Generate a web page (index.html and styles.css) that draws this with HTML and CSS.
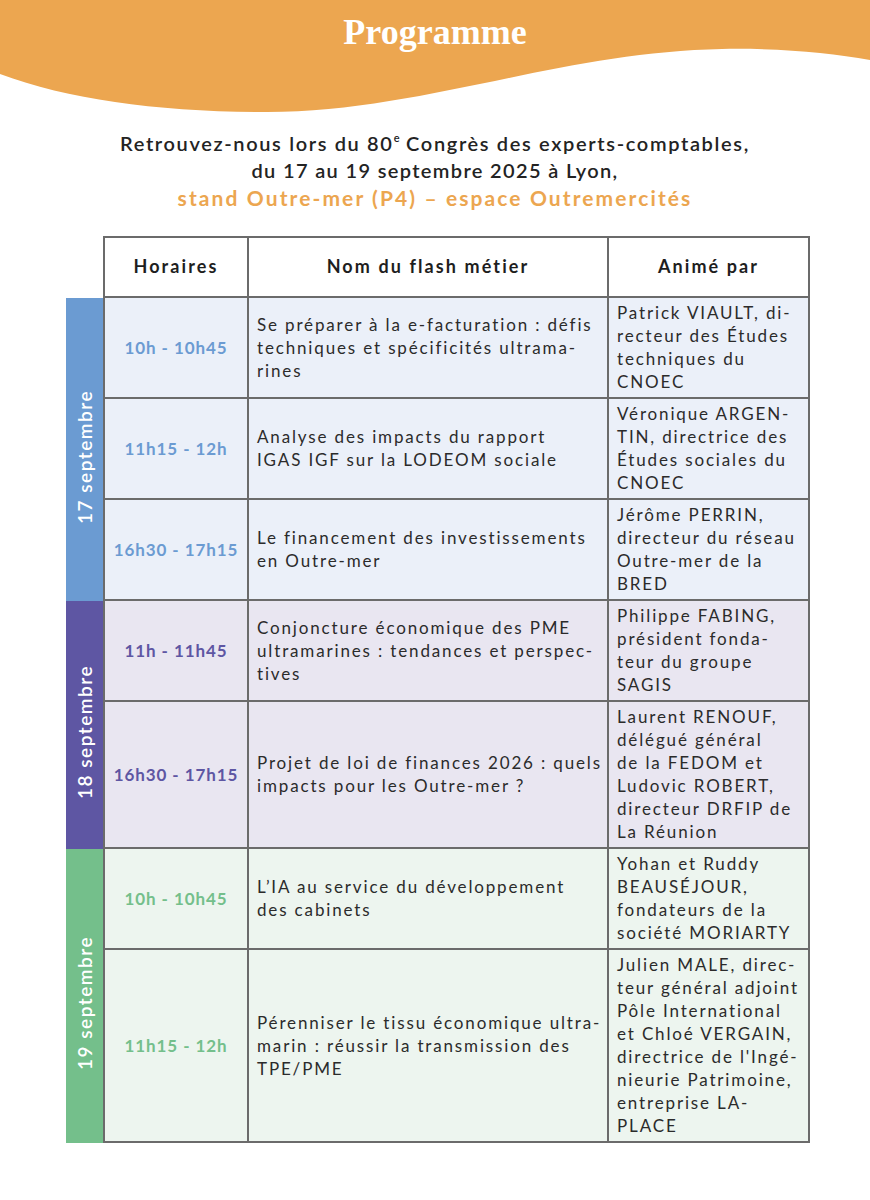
FILE: index.html
```html
<!DOCTYPE html>
<html lang="fr">
<head>
<meta charset="utf-8">
<title>Programme</title>
<link rel="stylesheet" href="styles.css">
</head>
<body>
<header class="hero">
  <svg class="wave" viewBox="0 0 870 120" width="870" height="120" aria-hidden="true">
    <path d="M0 0 H870 V60 C830 53 780 48 722 49 C560 52 420 112 267 112 C160 112 70 100 0 74 Z" fill="#eca650"/>
  </svg>
  <h1 class="title">Programme</h1>
</header>

<section class="intro">
  <p>Retrouvez-nous lors du 80<sup>e</sup> Congrès des experts-comptables,</p>
  <p class="second">du 17 au 19 septembre 2025 à Lyon,</p>
  <p class="accent">stand Outre-mer (P4) – espace Outremercités</p>
</section>

<section class="schedule">
  <div class="head-line">
    <div class="spacer"></div>
    <div class="row head">
      <div class="cell">Horaires</div>
      <div class="cell">Nom du flash métier</div>
      <div class="cell">Animé par</div>
    </div>
  </div>

  <div class="day blue">
    <div class="band"><span>17 septembre</span></div>
    <div class="rows">
      <div class="row">
        <div class="cell time">10h - 10h45</div>
        <div class="cell topic">Se préparer à la e-facturation : défis<br>techniques et spécificités ultrama-<br>rines</div>
        <div class="cell who">Patrick VIAULT, di-<br>recteur des Études<br>techniques du<br>CNOEC</div>
      </div>
      <div class="row">
        <div class="cell time">11h15 - 12h</div>
        <div class="cell topic">Analyse des impacts du rapport<br>IGAS IGF sur la LODEOM sociale</div>
        <div class="cell who">Véronique ARGEN-<br>TIN, directrice des<br>Études sociales du<br>CNOEC</div>
      </div>
      <div class="row">
        <div class="cell time">16h30 - 17h15</div>
        <div class="cell topic">Le financement des investissements<br>en Outre-mer</div>
        <div class="cell who">Jérôme PERRIN,<br>directeur du réseau<br>Outre-mer de la<br>BRED</div>
      </div>
    </div>
  </div>

  <div class="day purple">
    <div class="band"><span>18 septembre</span></div>
    <div class="rows">
      <div class="row">
        <div class="cell time">11h - 11h45</div>
        <div class="cell topic">Conjoncture économique des PME<br>ultramarines : tendances et perspec-<br>tives</div>
        <div class="cell who">Philippe FABING,<br>président fonda-<br>teur du groupe<br>SAGIS</div>
      </div>
      <div class="row">
        <div class="cell time">16h30 - 17h15</div>
        <div class="cell topic">Projet de loi de finances 2026 : quels<br>impacts pour les Outre-mer ?</div>
        <div class="cell who">Laurent RENOUF,<br>délégué général<br>de la FEDOM et<br>Ludovic ROBERT,<br>directeur DRFIP de<br>La Réunion</div>
      </div>
    </div>
  </div>

  <div class="day green">
    <div class="band"><span>19 septembre</span></div>
    <div class="rows">
      <div class="row">
        <div class="cell time">10h - 10h45</div>
        <div class="cell topic">L’IA au service du développement<br>des cabinets</div>
        <div class="cell who">Yohan et Ruddy<br>BEAUSÉJOUR,<br>fondateurs de la<br>société MORIARTY</div>
      </div>
      <div class="row">
        <div class="cell time">11h15 - 12h</div>
        <div class="cell topic">Pérenniser le tissu économique ultra-<br>marin : réussir la transmission des<br>TPE/PME</div>
        <div class="cell who">Julien MALE, direc-<br>teur général adjoint<br>Pôle International<br>et Chloé VERGAIN,<br>directrice de l'Ingé-<br>nieurie Patrimoine,<br>entreprise LA-<br>PLACE</div>
      </div>
    </div>
  </div>
</section>
</body>
</html>
```

FILE: styles.css
```css
* { box-sizing: border-box; }

html, body {
  margin: 0;
  padding: 0;
  background: #ffffff;
}

body {
  width: 870px;
  font-family: "Lato", "Open Sans", sans-serif;
  color: #2a2a2a;
}

.hero {
  position: relative;
  height: 120px;
}

.wave {
  position: absolute;
  left: 0;
  top: 0;
  display: block;
}

.title {
  position: relative;
  margin: 0;
  padding-top: 11px;
  text-align: center;
  font-family: "Liberation Serif", "DejaVu Serif", serif;
  font-weight: 700;
  font-size: 36px;
  line-height: 42px;
  color: #ffffff;
  letter-spacing: 0;
}

.intro {
  margin-top: 10px;
  text-align: center;
  font-size: 20px;
  font-weight: 600;
  line-height: 27px;
  letter-spacing: 1.65px;
  color: #232323;
}

.intro p {
  margin: 0;
}

.intro .second {
  letter-spacing: 1.35px;
}

.intro sup {
  font-size: 11px;
  line-height: 0;
  letter-spacing: 0;
  vertical-align: 9px;
}

.intro .accent {
  color: #eca650;
  font-weight: 700;
  font-size: 21px;
  letter-spacing: 2.1px;
}

.schedule {
  margin: 25px 0 0 66px;
  width: 744px;
}

.head-line {
  display: flex;
}

.spacer {
  width: 37px;
  flex: none;
}

.row {
  display: grid;
  grid-template-columns: 144px 360px 201px;
}

.head {
  border-top: 2px solid #6b6b6b;
  border-left: 2px solid #6b6b6b;
}

.cell {
  border-right: 2px solid #6b6b6b;
  border-bottom: 2px solid #6b6b6b;
  padding: 3px 8px 4px 8px;
  font-size: 17px;
  line-height: 23px;
  letter-spacing: 1.85px;
  white-space: nowrap;
  color: #2b2b2b;
}

.head .cell {
  height: 60px;
  display: flex;
  align-items: center;
  justify-content: center;
  font-weight: 700;
  font-size: 18px;
  color: #1e1e1e;
  letter-spacing: 2.1px;
}

.day {
  display: flex;
}

.band {
  width: 37px;
  flex: none;
  display: flex;
  align-items: center;
  justify-content: center;
  padding-top: 14px;
}

.band span {
  writing-mode: vertical-rl;
  transform: rotate(180deg);
  color: #ffffff;
  font-weight: 600;
  font-size: 19px;
  letter-spacing: 1.5px;
  white-space: nowrap;
}

.rows {
  border-left: 2px solid #6b6b6b;
}

.time {
  display: flex;
  align-items: center;
  justify-content: center;
  font-weight: 700;
  font-size: 17px;
  letter-spacing: 0.9px;
}

.topic {
  display: flex;
  align-items: center;
}

.who {
  align-self: stretch;
}

.blue .band { background: #6b9bd2; }
.blue .rows { background: #ebf0f9; }
.blue .time { color: #6b9bd2; }

.purple .band { background: #5e56a3; }
.purple .rows { background: #e9e6f1; }
.purple .time { color: #5e56a3; }

.green .band { background: #74bf8b; }
.green .rows { background: #edf5ef; }
.green .time { color: #74bf8b; }
```
